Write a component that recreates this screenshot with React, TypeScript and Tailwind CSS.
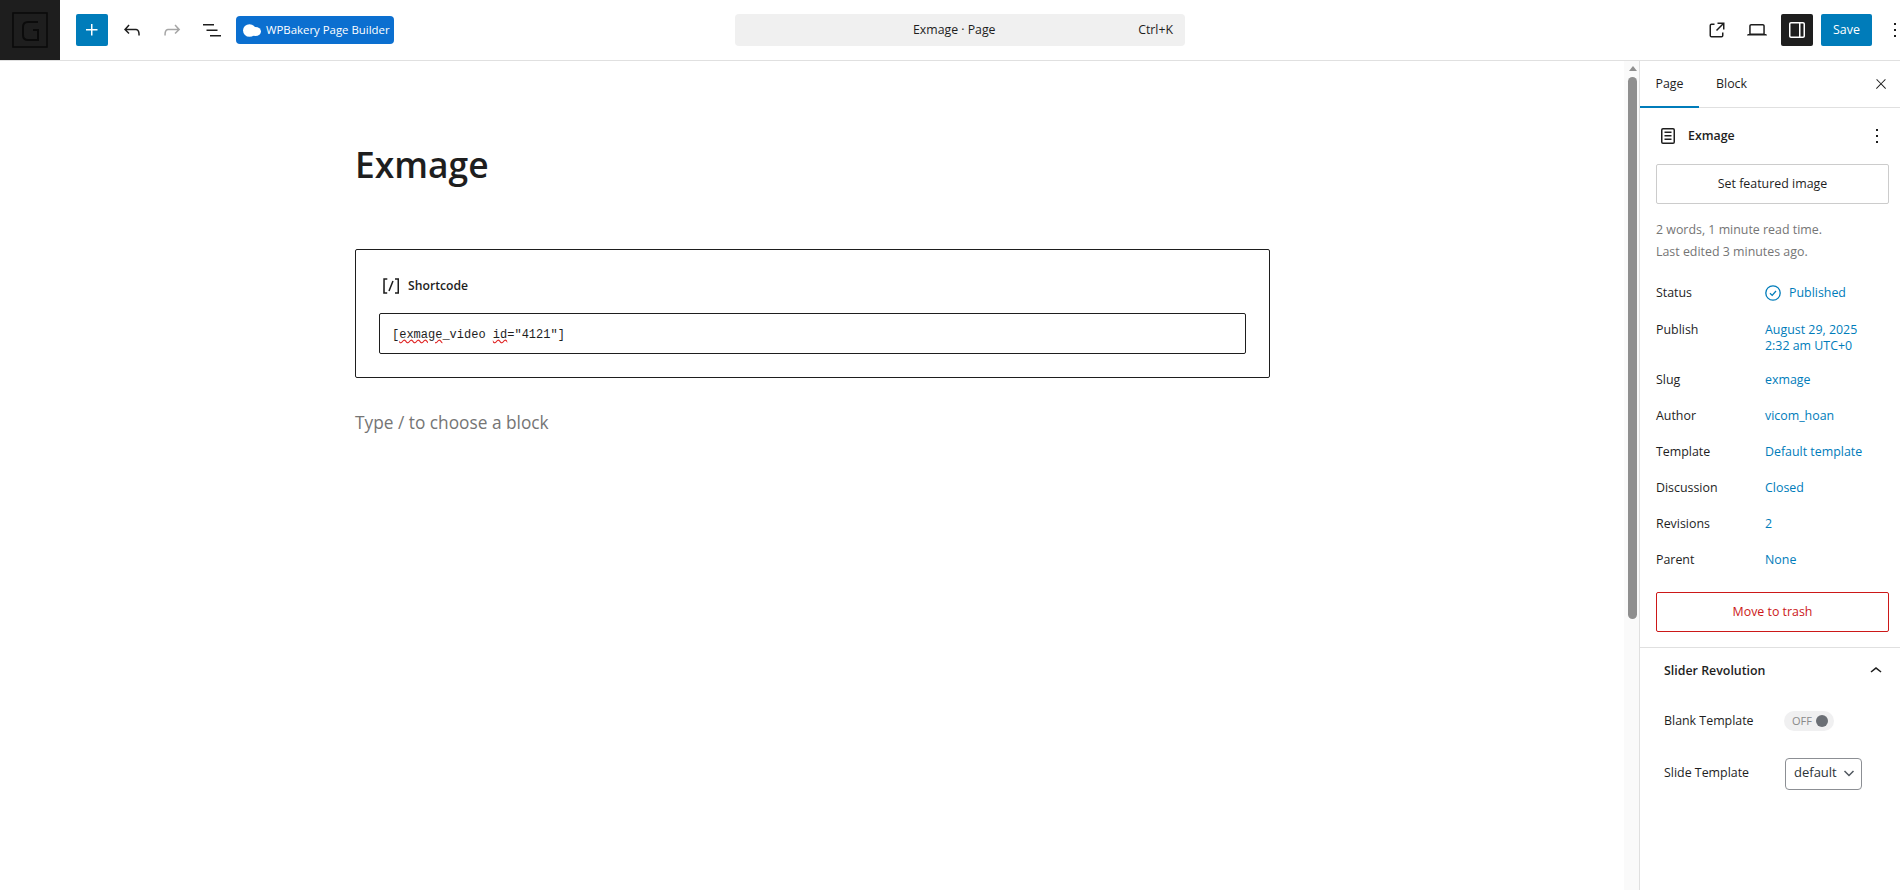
import React from 'react';

const icons = {
  plus: 'M11 12.5V17.5H12.5V12.5H17.5V11H12.5V6H11V11H6V12.5H11Z',
  undo: 'M18.3 11.7c-.6-.6-1.4-.9-2.3-.9H6.7l2.9-3.3-1.1-1-4.5 5L8.5 16l1-1-2.7-2.7H16c.5 0 .9.2 1.3.5 1 1 1 3.4 1 4.5v.3h1.5v-.2c0-1.5 0-4.3-1.5-5.7z',
  redo: 'M15.6 6.5l-1.1 1 2.9 3.3H8c-.9 0-1.7.3-2.3.9-1.4 1.5-1.4 4.2-1.4 5.6v.2h1.5v-.3c0-1.1 0-3.5 1-4.5.3-.3.7-.5 1.3-.5h9.2L14.5 15l1.1 1.1 4.6-4.6-4.6-5z',
  list: 'M3 6h11v1.5H3V6Zm3.5 5.5h11V13h-11v-1.5ZM21 17H10v1.5h11V17Z',
  external:
    'M19.5 4.5h-7V6h4.44l-5.97 5.97 1.06 1.06L18 7.06v4.44h1.5v-7Zm-13 1a2 2 0 0 0-2 2v10a2 2 0 0 0 2 2h10a2 2 0 0 0 2-2v-3H17v3a.5.5 0 0 1-.5.5h-10a.5.5 0 0 1-.5-.5v-10a.5.5 0 0 1 .5-.5h3V5.5h-3Z',
  desktop:
    'M20.5 16h-.7V8c0-1.1-.9-2-2-2H6.2c-1.1 0-2 .9-2 2v8h-.7c-.8 0-1.5.7-1.5 1.5h20c0-.8-.7-1.5-1.5-1.5zM5.7 8c0-.3.2-.5.5-.5h11.6c.3 0 .5.2.5.5v7.6H5.7V8z',
  drawer:
    'M18 4H6c-1.1 0-2 .9-2 2v12c0 1.1.9 2 2 2h12c1.1 0 2-.9 2-2V6c0-1.1-.9-2-2-2zm-4 14.5H6c-.3 0-.5-.2-.5-.5V6c0-.3.2-.5.5-.5h8v13zm4.5-.5c0 .3-.2.5-.5.5h-2.5v-13H18c.3 0 .5.2.5.5v12z',
  more: 'M13 19h-2v-2h2v2zm0-6h-2v-2h2v2zm0-6h-2V5h2v2z',
  close: 'M13 11.8l6.1-6.3-1-1-6.1 6.2-6.1-6.2-1 1 6.1 6.3-6.5 6.7 1 1 6.5-6.6 6.5 6.6 1-1z',
  page: 'M15.5 7.5h-7V9h7V7.5Zm-7 3.5h7v1.5h-7V11Zm7 3.5h-7V16h7v-1.5ZM17 4H7a2 2 0 0 0-2 2v12a2 2 0 0 0 2 2h10a2 2 0 0 0 2-2V6a2 2 0 0 0-2-2ZM7 5.5h10a.5.5 0 0 1 .5.5v12a.5.5 0 0 1-.5.5H7a.5.5 0 0 1-.5-.5V6a.5.5 0 0 1 .5-.5Z',
  shortcode:
    'M16 4.2v1.5h2.5v12.5H16v1.5h4V4.2h-4zM4.2 19.8h4v-1.5H5.8V5.8h2.5V4.2h-4l-.1 15.6zm5.1-3.1l1.4.6 4-10-1.4-.6-4 10z',
  chevronUp: 'M6.5 12.4L12 8l5.5 4.4-.9 1.2L12 10l-4.5 3.6-1-1.2z',
};

const Icon = ({ d, className }: { d: string; className: string }) => (
  <svg viewBox="0 0 24 24" className={className} fill="currentColor">
    <path d={d} />
  </svg>
);

const settings = [
  { label: 'Author', value: 'vicom_hoan' },
  { label: 'Template', value: 'Default template' },
  { label: 'Discussion', value: 'Closed' },
  { label: 'Revisions', value: '2' },
  { label: 'Parent', value: 'None' },
];

const Header = () => (
  <header className="flex h-[61px] shrink-0 items-center border-b border-[#e0e0e0] bg-white">
    <div className="flex h-[60px] w-[60px] shrink-0 items-center justify-center bg-[#1e1e1e]">
      <svg viewBox="0 0 36 36" className="h-9 w-9" fill="none" stroke="#0b0b0b">
        <rect x="1" y="1" width="34" height="34" strokeWidth="1.6" />
        <path d="M26 10H16c-3 0-5 2-5 5v8c0 3 2 5 5 5h10V18h-5" strokeWidth="2" />
      </svg>
    </div>
    <button className="ml-4 flex h-8 w-8 shrink-0 items-center justify-center rounded-[2px] bg-[#007cba] text-white">
      <Icon d={icons.plus} className="h-6 w-6" />
    </button>
    <Icon d={icons.undo} className="ml-[12px] h-6 w-6 shrink-0 text-[#1e1e1e]" />
    <Icon d={icons.redo} className="ml-4 h-6 w-6 shrink-0 text-[#a6a6a6]" />
    <Icon d={icons.list} className="ml-4 h-6 w-6 shrink-0 text-[#1e1e1e]" />
    <button className="ml-[12px] flex h-7 w-[158px] shrink-0 items-center rounded-[4px] bg-[#0b6fd0] pl-[7px] text-[11.4px] text-white">
      <svg viewBox="0 0 18 13" className="h-[13px] w-[18px] shrink-0" fill="white">
        <ellipse cx="6.5" cy="6.5" rx="6.5" ry="6.3" />
        <ellipse cx="12.5" cy="7.5" rx="5.5" ry="4.6" />
      </svg>
      <span className="ml-[5px] whitespace-nowrap">WPBakery Page Builder</span>
    </button>
    <div className="ml-[341px] flex h-8 w-[450px] shrink-0 items-center rounded-[4px] bg-[#f0f0f0] pr-3 text-[12.3px] text-[#1e1e1e]">
      <span className="ml-[178px]">Exmage · Page</span>
      <span className="ml-auto">Ctrl+K</span>
    </div>
    <Icon d={icons.external} className="ml-[520px] h-6 w-6 shrink-0 text-[#1e1e1e]" />
    <Icon d={icons.desktop} className="ml-4 h-6 w-6 shrink-0 text-[#1e1e1e]" />
    <button className="ml-3 flex h-8 w-8 shrink-0 items-center justify-center rounded-[2px] bg-[#1e1e1e] text-white">
      <Icon d={icons.drawer} className="h-6 w-6" />
    </button>
    <button className="ml-2 h-8 w-[51px] shrink-0 rounded-[2px] bg-[#007cba] text-[12.4px] text-white">Save</button>
    <Icon d={icons.more} className="ml-[11px] h-6 w-6 shrink-0 text-[#1e1e1e]" />
  </header>
);

const Editor = () => (
  <main className="min-w-0 flex-1 bg-white pl-[355px]">
    <div className="w-[915px]">
      <h1 className="mt-[77px] h-[52px] text-[35.4px] leading-[52px] font-semibold text-[#1e1e1e]">Exmage</h1>
      <section className="mt-[59px] h-[129px] rounded-[2px] border border-[#1e1e1e] px-[23px] pt-[24px]">
        <div className="flex h-6 items-center text-[#1e1e1e]">
          <Icon d={icons.shortcode} className="h-6 w-6" />
          <span className="ml-[5px] text-[12.2px] font-semibold">Shortcode</span>
        </div>
        <div className="mt-[15px] flex h-[41px] items-center rounded-[2px] border border-[#1e1e1e] pt-[2px] pl-[12px] font-['Liberation_Mono',monospace] text-[12px] whitespace-pre text-[#1e1e1e]">
          [<span className="underline decoration-[#e02424] decoration-wavy">exmage</span>_video{' '}
          <span className="underline decoration-[#e02424] decoration-wavy">id</span>="4121"]
        </div>
      </section>
      <p className="mt-[31px] text-[17.3px] leading-7 text-[#757575]">Type / to choose a block</p>
    </div>
  </main>
);

const Scrollbar = () => (
  <div className="flex w-[15px] shrink-0 flex-col items-center bg-[#fafafa] pl-[2px]">
    <div className="mt-[5px] h-0 w-0 border-x-[4px] border-b-[5px] border-x-transparent border-b-[#8f8f8f]" />
    <div className="mt-[6px] h-[542px] w-[9px] rounded-[5px] bg-[#8f8f8f]" />
  </div>
);

const Sidebar = () => (
  <aside className="w-[261px] shrink-0 overflow-hidden border-l border-[#e0e0e0] bg-white text-[12.4px] text-[#1e1e1e]">
    <div className="flex h-[47px] items-center border-b border-[#e0e0e0] pr-[11px]">
      <div className="relative flex h-full w-[59px] items-center justify-center">
        Page
        <span className="absolute inset-x-0 bottom-[-1px] h-[2px] bg-[#007cba]" />
      </div>
      <span className="ml-[17px]">Block</span>
      <Icon d={icons.close} className="ml-auto h-4 w-4" />
    </div>
    <div className="pr-[11px] pl-4">
      <div className="mt-4 flex h-[24px] items-center justify-between">
        <div className="flex items-center">
          <Icon d={icons.page} className="h-6 w-6" />
          <span className="ml-2 font-semibold">Exmage</span>
        </div>
        <Icon d={icons.more} className="h-6 w-6" />
      </div>
      <button className="mt-[16px] block h-10 w-full rounded-[2px] border border-[#cccccc] bg-white">
        Set featured image
      </button>
      <div className="mt-[15px] text-[#757575]">
        <p className="leading-[22px]">2 words, 1 minute read time.</p>
        <p className="leading-[22px]">Last edited 3 minutes ago.</p>
      </div>
      <div className="mt-[12px] flex h-9 items-center">
        <span className="w-[109px]">Status</span>
        <span className="flex items-center text-[#007cba]">
          <svg viewBox="0 0 16 16" className="h-4 w-4" fill="none" stroke="currentColor" strokeWidth="1.3">
            <circle cx="8" cy="8" r="7.2" />
            <path d="M5 8.3l2.2 2.1L11 6" />
          </svg>
          <span className="ml-2">Published</span>
        </span>
      </div>
      <div className="flex h-[51px] items-start pt-[11px] leading-4">
        <span className="w-[109px]">Publish</span>
        <span className="text-[#007cba]">
          August 29, 2025
          <br />
          2:32 am UTC+0
        </span>
      </div>
      <div className="flex h-9 items-center">
        <span className="w-[109px]">Slug</span>
        <span className="text-[#007cba]">exmage</span>
      </div>
      {settings.map((row) => (
        <div key={row.label} className="flex h-9 items-center">
          <span className="w-[109px]">{row.label}</span>
          <span className="text-[#007cba]">{row.value}</span>
        </div>
      ))}
      <button className="mt-[14px] block h-10 w-full rounded-[2px] border border-[#cc1818] bg-white text-[#cc1818]">
        Move to trash
      </button>
    </div>
    <div className="mt-[15px] border-t border-[#e0e0e0] pr-3 pl-6">
      <div className="flex h-[46px] items-center justify-between">
        <span className="font-semibold">Slider Revolution</span>
        <Icon d={icons.chevronUp} className="h-6 w-6" />
      </div>
      <div className="mt-[17px] flex h-[20px] items-center">
        <span className="w-[120px]">Blank Template</span>
        <div className="flex h-5 w-[50px] items-center justify-between rounded-[10px] bg-[#f0f0f1] pr-[6px] pl-2 text-[11px] text-[#8a8a8a]">
          OFF
          <span className="h-3 w-3 rounded-full bg-[#6b6f75]" />
        </div>
      </div>
      <div className="mt-[27px] flex h-8 items-center">
        <span className="w-[121px] pb-[2px]">Slide Template</span>
        <div className="flex h-8 w-[77px] items-center justify-between rounded-[4px] border border-[#8c8f94] pr-[6px] pb-[2px] pl-2 text-[13px] text-[#2c3338]">
          default
          <svg viewBox="0 0 12 12" className="h-3 w-3" fill="none" stroke="#50575e" strokeWidth="1.5">
            <path d="M1.5 4l4.5 4.5L10.5 4" />
          </svg>
        </div>
      </div>
    </div>
  </aside>
);

export default function App() {
  return (
    <div className="flex h-screen w-full flex-col overflow-hidden bg-white font-['Open_Sans','Noto_Sans',sans-serif]">
      <Header />
      <div className="flex min-h-0 flex-1">
        <Editor />
        <Scrollbar />
        <Sidebar />
      </div>
    </div>
  );
}
